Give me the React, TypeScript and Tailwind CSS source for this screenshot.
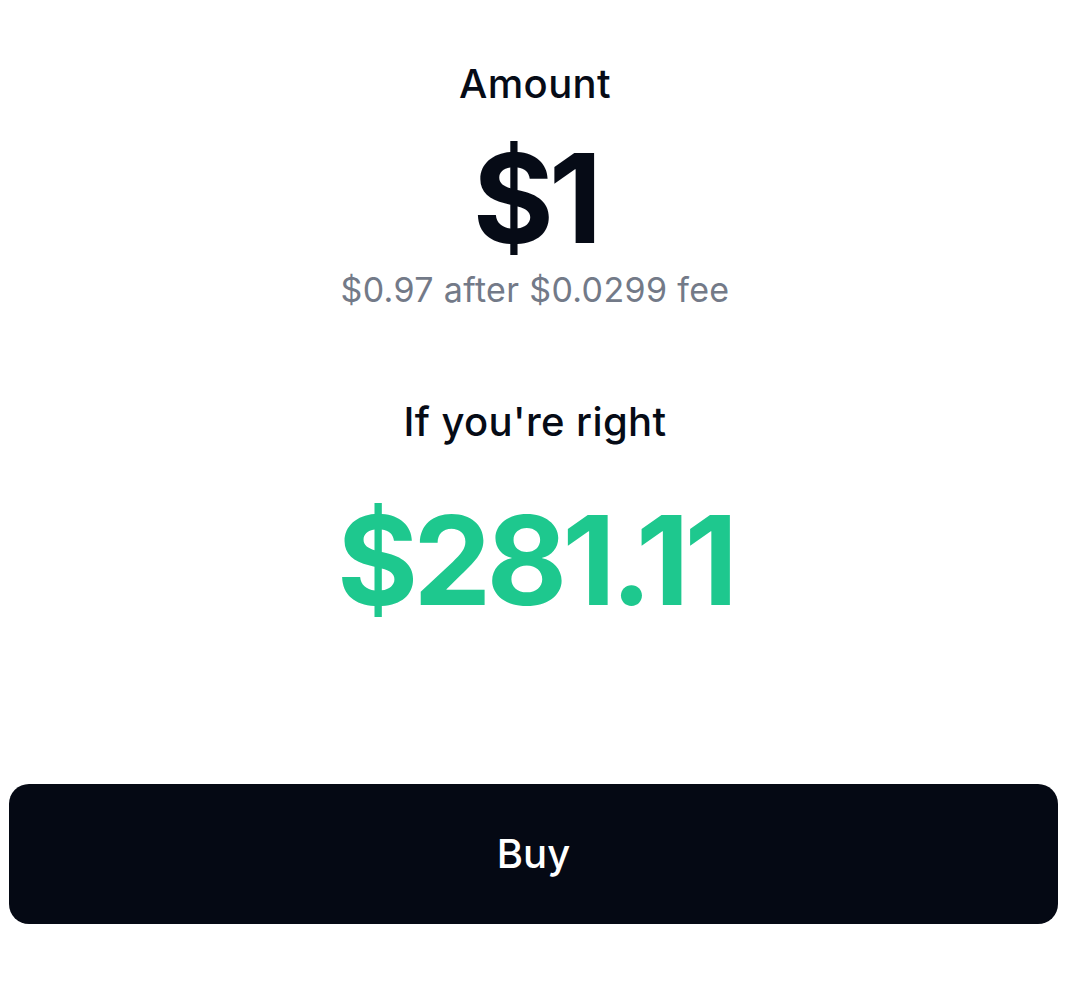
import React from 'react';

const App: React.FC = () => {
  return (
    <div className="min-h-[985px] w-full bg-white font-['Inter',sans-serif] text-[#060b16]">
      <div className="flex flex-col items-center pt-[60px]">
        <h2 className="text-[40px] leading-[48px] font-medium tracking-[0.01em]">Amount</h2>
        <p className="mt-[28px] text-[124px] leading-[124px] font-bold tracking-[-0.04em]">$1</p>
        <p className="mt-[10px] text-[34px] leading-[40px] tracking-[0.01em] text-[#737a88]">
          $0.97 after $0.0299 fee
        </p>
        <h2 className="mt-[88px] text-[40px] leading-[48px] font-medium tracking-[0.01em]">If you're right</h2>
        <p className="mt-[52px] text-[124px] leading-[124px] font-bold tracking-[-0.04em] text-[#1ec88e]">
          $281.11
        </p>
      </div>
      <div className="ml-[9px] mr-[12px] mt-[162px]">
        <button className="flex h-[140px] w-full items-center justify-center rounded-[20px] bg-[#050914] text-[40px] font-medium text-white">
          Buy
        </button>
      </div>
    </div>
  );
};

export default App;
